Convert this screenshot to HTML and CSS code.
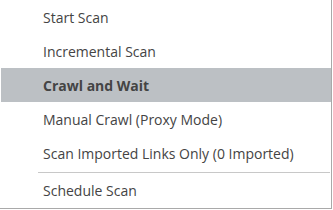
FILE: index.html
```html
<!DOCTYPE html>
<html lang="en">
<head>
    <meta charset="UTF-8">
    <title>Scan Menu</title>
    <link rel="stylesheet" href="styles.css">
</head>
<body>
    <div class="menu">
        <div class="item">Start Scan</div>
        <div class="item">Incremental Scan</div>
        <div class="item active">Crawl and Wait</div>
        <div class="item">Manual Crawl (Proxy Mode)</div>
        <div class="item">Scan Imported Links Only (0 Imported)</div>
        <div class="divider"></div>
        <div class="item">Schedule Scan</div>
    </div>
</body>
</html>
```

FILE: styles.css
```css
body {
    margin: 0;
    padding: 0;
    background-color: #fff;
    font-family: "Open Sans", "Noto Sans", sans-serif;
}

.menu {
    width: 331px;
    height: 208px;
    border-right: 1px solid #a9a9a9;
    border-bottom: 1px solid #a9a9a9;
    background-color: #fff;
    overflow: hidden;
}

.item {
    height: 33px;
    padding-top: 1px;
    line-height: 34px;
    padding-left: 42px;
    margin-left: 1px;
    font-size: 14px;
    color: #444;
    white-space: nowrap;
}

.item.active {
    background-color: #bcc0c4;
    font-weight: bold;
}

.divider {
    height: 1px;
    margin: 2px 1px 0 38px;
    background-color: #c8c8c8;
}
```
